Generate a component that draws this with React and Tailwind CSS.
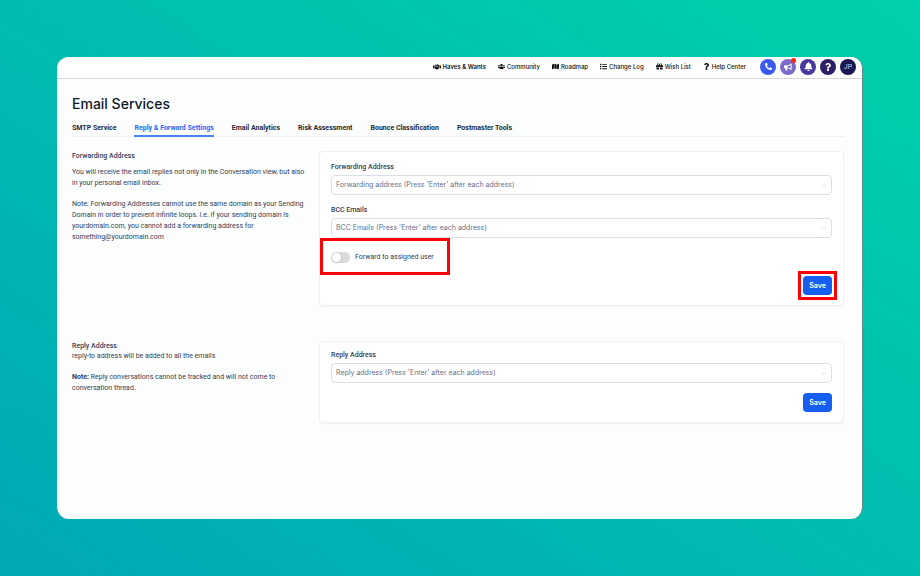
import { useState } from 'react';
import {
  FaBell,
  FaBullhorn,
  FaGift,
  FaHandshake,
  FaList,
  FaMap,
  FaPhoneAlt,
  FaQuestion,
  FaUsers,
} from 'react-icons/fa';
import { ChevronDown } from 'lucide-react';

const NAV_LINKS = [
  { label: 'Haves & Wants', icon: FaHandshake, strong: true },
  { label: 'Community', icon: FaUsers },
  { label: 'Roadmap', icon: FaMap },
  { label: 'Change Log', icon: FaList },
  { label: 'Wish List', icon: FaGift },
  { label: 'Help Center', icon: FaQuestion },
];

const TABS = [
  'SMTP Service',
  'Reply & Forward Settings',
  'Email Analytics',
  'Risk Assessment',
  'Bounce Classification',
  'Postmaster Tools',
];

function RoundButton({ label, className, children }) {
  return (
    <button
      type="button"
      aria-label={label}
      className={`relative flex size-4 items-center justify-center rounded-full text-white ${className}`}
    >
      {children}
    </button>
  );
}

function TopBar() {
  return (
    <header className="flex h-[22px] items-center justify-end gap-[14px] border-b border-[#d9dadc] bg-white pr-[6px] pb-[2px]">
      <nav className="flex items-center gap-3 font-['Inter',sans-serif]">
        {NAV_LINKS.map(({ label, icon: Icon, strong }) => (
          <a
            key={label}
            href="#"
            className={`flex items-center gap-[2px] text-[6px] leading-[10px] text-[#111] ${
              strong ? 'font-semibold' : 'font-medium'
            }`}
          >
            <Icon className={strong ? 'size-2' : 'size-[7px]'} />
            {label}
          </a>
        ))}
      </nav>
      <div className="flex items-center gap-1">
        <RoundButton label="Call" className="bg-[#3b5bf0]">
          <FaPhoneAlt className="size-[7px]" />
        </RoundButton>
        <RoundButton label="Announcements" className="bg-[#7c6bc8]">
          <FaBullhorn className="size-2" />
          <span className="absolute -top-px right-0 size-[5px] rounded-full bg-[#ff2414]" />
        </RoundButton>
        <RoundButton label="Notifications" className="bg-[#48389f]">
          <FaBell className="size-[9px]" />
        </RoundButton>
        <RoundButton label="Help" className="bg-[#2d1f68]">
          <FaQuestion className="size-2" />
        </RoundButton>
        <RoundButton label="Account" className="bg-[#191654]">
          <span className="text-[7px] leading-[10px] text-[#d5d4ea]">JP</span>
        </RoundButton>
      </div>
    </header>
  );
}

function Tabs({ active, onSelect }) {
  return (
    <div role="tablist" className="flex gap-[18px] border-b border-[#f0f1f3]">
      {TABS.map((tab) => (
        <button
          key={tab}
          type="button"
          role="tab"
          aria-selected={tab === active}
          onClick={() => onSelect(tab)}
          className={`-mb-px border-b-2 pt-1 pb-[2px] text-[7px] leading-[10px] font-bold whitespace-nowrap ${
            tab === active
              ? 'border-[#4a82f6] text-[#2668f5]'
              : 'border-transparent text-[#1f2937]'
          }`}
        >
          {tab}
        </button>
      ))}
    </div>
  );
}

function AddressField({ id, label, placeholder }) {
  return (
    <div>
      <label htmlFor={id} className="block text-[7px] leading-[10px] font-medium text-[#344054]">
        {label}
      </label>
      <div className="mt-[3px] flex h-5 items-center rounded-[4px] border border-[#dcdee6] bg-white px-1">
        <input
          id={id}
          type="text"
          placeholder={placeholder}
          className="min-w-0 flex-1 font-['Inter',sans-serif] text-[7px] leading-[10px] text-[#344054] outline-none placeholder:text-[#667085]"
        />
        <ChevronDown className="size-[7px] text-[#c5c8ce]" />
      </div>
    </div>
  );
}

function SaveButton({ highlighted }) {
  return (
    <div className="relative">
      <button
        type="button"
        className="block h-[19px] w-[29px] rounded-[4px] bg-[#155eef] font-['Inter',sans-serif] text-[7px] leading-[10px] font-semibold text-white"
      >
        Save
      </button>
      {highlighted && (
        <span className="pointer-events-none absolute -inset-[5px] border-3 border-[#fb0007]" />
      )}
    </div>
  );
}

function ForwardSwitch() {
  const [checked, setChecked] = useState(false);

  return (
    <div className="relative flex h-3 items-center">
      <label className="flex items-center gap-[5px] text-[7px] leading-[10px] text-[#344054]">
        <input
          type="checkbox"
          role="switch"
          checked={checked}
          onChange={(e) => setChecked(e.target.checked)}
          className="h-[11px] w-[19px] appearance-none rounded-full bg-[#dbdbdb] p-px before:block before:size-[9px] before:rounded-full before:bg-white before:shadow-sm checked:bg-[#155eef] checked:before:ml-2"
        />
        Forward to assigned user
      </label>
      {/* Callout frame */}
      <span className="pointer-events-none absolute -top-[13px] -left-[11px] h-[37px] w-[130px] border-3 border-[#fb0007]" />
    </div>
  );
}

function Section({ intro, compact, children }) {
  return (
    <section className="grid grid-cols-[247px_1fr] items-start">
      <div className="pr-[10px] text-[7px] leading-[11px] text-[#344054]">{intro}</div>
      <div
        className={`rounded-[4px] border border-[#eef0f2] bg-white px-[11px] pb-[10px] shadow-xs ${
          compact ? 'pt-2' : 'pt-[10px]'
        }`}
      >
        {children}
      </div>
    </section>
  );
}

export default function App() {
  const [tab, setTab] = useState('Reply & Forward Settings');

  return (
    <div className="flex min-h-screen flex-col bg-linear-to-tr from-[#00a9b5] to-[#00d0aa] p-[57px] font-['Roboto',sans-serif]">
      <div className="flex flex-1 flex-col overflow-hidden rounded-xl border-r border-[#5f8c86] bg-[#fcfefd]">
        <TopBar />
        <main className="pt-4 pr-[18px] pb-6 pl-[15px]">
          <h1 className="font-['Inter',sans-serif] text-[14px] leading-[18px] font-medium text-[#101828]">
            Email Services
          </h1>
          <div className="mt-[6px]">
            <Tabs active={tab} onSelect={setTab} />
          </div>

          <div className="mt-[14px] flex flex-col gap-[35px]">
            <Section
              intro={
                <>
                  <h2 className="leading-[10px] font-medium">Forwarding Address</h2>
                  <p className="mt-[6px]">
                    You will receive the email replies not only in the Conversation view, but also
                    in your personal email inbox.
                  </p>
                  <p className="mt-[10px]">
                    Note: Forwarding Addresses cannot use the same domain as your Sending Domain in
                    order to prevent infinite loops. I.e. if your sending domain is yourdomain.com,
                    you cannot add a forwarding address for something@yourdomain.com
                  </p>
                </>
              }
            >
              <div className="flex flex-col gap-[10px]">
                <AddressField
                  id="forwarding-address"
                  label="Forwarding Address"
                  placeholder="Forwarding address (Press 'Enter' after each address)"
                />
                <AddressField
                  id="bcc-emails"
                  label="BCC Emails"
                  placeholder="BCC Emails (Press 'Enter' after each address)"
                />
              </div>
              <div className="mt-[13px]">
                <ForwardSwitch />
              </div>
              <div className="mt-[13px] flex justify-end">
                <SaveButton highlighted />
              </div>
            </Section>

            <Section
              compact
              intro={
                <>
                  <h2 className="leading-[10px] font-medium">Reply Address</h2>
                  <p>reply-to address will be added to all the emails</p>
                  <p className="mt-[10px]">
                    <strong className="font-bold">Note:</strong> Reply conversations cannot be
                    tracked and will not come to conversation thread.
                  </p>
                </>
              }
            >
              <AddressField
                id="reply-address"
                label="Reply Address"
                placeholder="Reply address (Press 'Enter' after each address)"
              />
              <div className="mt-[10px] flex justify-end">
                <SaveButton />
              </div>
            </Section>
          </div>
        </main>
      </div>
    </div>
  );
}
